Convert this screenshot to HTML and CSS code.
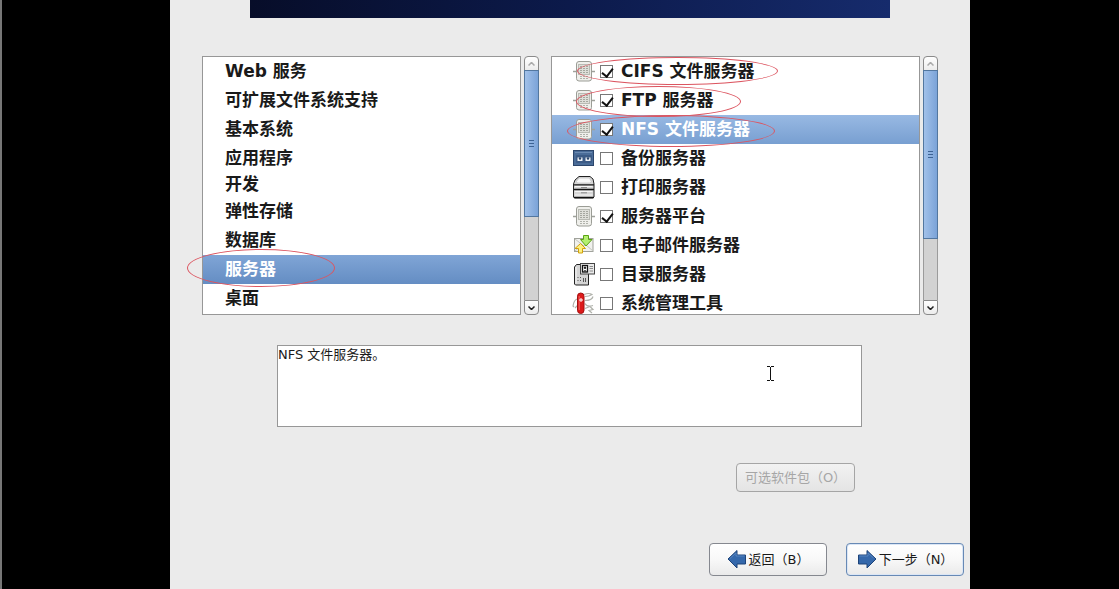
FILE: index.html
```html
<!DOCTYPE html>
<html lang="zh-CN">
<head>
  <meta charset="UTF-8">
  <title>服务器</title>
  <link rel="stylesheet" href="styles.css">
</head>
<body>

<!-- Shared server icon -->
<svg class="sprite" aria-hidden="true">
  <symbol id="server" viewBox="0 0 24 24">
    <path d="M1 12.500h22" stroke="#9fa19b" stroke-width="1.500"/>
    <rect x="4.500" y="2.500" width="15" height="19.500" rx="2.500" fill="#efefeb" stroke="#9b9d96"/>
    <rect x="6.500" y="5.500" width="11" height="10" fill="#dedfd9" stroke="#b9bbb4"/>
    <path d="M8 7.500h8M8 9.500h8M8 11.500h8M8 13.500h8" stroke="#a5a79f" stroke-dasharray="2 1"/>
    <path d="M8 17.500h2M11 17.500h2M14 17.500h2M8 19.500h2M11 19.500h2M14 19.500h2" stroke="#b0b2ab"/>
  </symbol>
</svg>

<main class="installer">
  <div class="banner"></div>

  <div class="panes">
    <!-- Groups -->
    <section class="pane">
      <ul class="list groups">
        <li><button type="button">Web 服务</button></li>
        <li><button type="button">可扩展文件系统支持</button></li>
        <li><button type="button">基本系统</button></li>
        <li><button type="button">应用程序</button></li>
        <li class="short"><button type="button">开发</button></li>
        <li><button type="button">弹性存储</button></li>
        <li><button type="button">数据库</button></li>
        <li class="selected"><button type="button">服务器</button></li>
        <li><button type="button">桌面</button></li>
      </ul>
      <div class="scrollbar">
        <button class="step up" type="button" aria-label="向上" disabled><svg viewBox="0 0 7 4"><path d="M.5 3.5l3-3 3 3"/></svg></button>
        <div class="track"><div class="thumb thumb-groups"><span class="grip"></span></div></div>
        <button class="step down" type="button" aria-label="向下"><svg viewBox="0 0 7 4"><path d="M.5 .5l3 3 3-3"/></svg></button>
      </div>
      <span class="mark mark-group"></span>
    </section>

    <!-- Packages -->
    <section class="pane">
      <ul class="list packages">
        <li>
          <svg class="icon"><use href="#server"/></svg>
          <input type="checkbox" id="cifs" checked>
          <label for="cifs">CIFS 文件服务器</label>
        </li>
        <li>
          <svg class="icon"><use href="#server"/></svg>
          <input type="checkbox" id="ftp" checked>
          <label for="ftp">FTP 服务器</label>
        </li>
        <li class="selected">
          <svg class="icon"><use href="#server"/></svg>
          <input type="checkbox" id="nfs" checked>
          <label for="nfs">NFS 文件服务器</label>
        </li>
        <li>
          <svg class="icon" viewBox="0 0 24 24">
            <rect x="1.500" y="4.500" width="20" height="15" fill="#4a6c98" stroke="#2c466c"/>
            <path d="M3 6.500h17" stroke="#6c8bb3"/>
            <rect x="4" y="9" width="16" height="8" rx="1" fill="#3c5b86"/>
            <path d="M5.500 11.500h5v3.500h-5zM13.500 11.500h5v3.500h-5z" fill="#f0f3f7"/>
            <circle cx="8" cy="12.500" r="1.200" fill="#2c466c"/>
            <circle cx="16" cy="12.500" r="1.200" fill="#2c466c"/>
          </svg>
          <input type="checkbox" id="backup">
          <label for="backup">备份服务器</label>
        </li>
        <li>
          <svg class="icon" viewBox="0 0 24 24">
            <path d="M1.500 9l1.500-4 4-3.500h11l3 2.500 1 5v13l-1 1H2.500l-1-1z" fill="#d6d6d6" stroke="#222"/>
            <path d="M7 3h10.500l2 4-2 1H6L4 7z" fill="#f8f8f8" stroke="#c4c4c4" stroke-width=".8"/>
            <path d="M3 11.500h17.500M3 16.500h17.500M3 20h17.500" stroke="#f6f6f6"/>
            <path d="M2 9.800h20M2 14.500h20" stroke="#151515" stroke-width="1.300"/>
            <path d="M9 12.500h6M9 17.800h6" stroke="#8a8a8a"/>
            <path d="M2 22.500h20" stroke="#111" stroke-width="1.400"/>
          </svg>
          <input type="checkbox" id="print">
          <label for="print">打印服务器</label>
        </li>
        <li>
          <svg class="icon"><use href="#server"/></svg>
          <input type="checkbox" id="platform" checked>
          <label for="platform">服务器平台</label>
        </li>
        <li>
          <svg class="icon" viewBox="0 0 24 24">
            <rect x="2.500" y="5.500" width="18.500" height="13" fill="#f1f1ee" stroke="#a0a29b"/>
            <path d="M3 18l7-6M21 18l-7-6M3 6l9 7 9-7" fill="none" stroke="#c3c5be"/>
            <path d="M11.500 2.500h5v4h3.500L14 13 8.500 6.500h3z" fill="#b4ef70" stroke="#5aa414"/>
            <path d="M8.500 10.500l5 5h-3v4.500h-4v-4.500H3z" fill="#fdf181" stroke="#d2a10c"/>
          </svg>
          <input type="checkbox" id="mail">
          <label for="mail">电子邮件服务器</label>
        </li>
        <li>
          <svg class="icon" viewBox="0 0 24 24">
            <path d="M2.500 5l2-2.500h12V23h-13l-1-1z" fill="#d4d4d4" stroke="#222"/>
            <path d="M4 5v16.500" stroke="#f8f8f8"/>
            <path d="M5.500 15.500h1M8 15.500h1M5.500 18.500h1M8 18.500h1M11.500 16v4M13.500 16v4" stroke="#555"/>
            <rect x="8.500" y="1.500" width="14" height="10.500" fill="#eaeaea" stroke="#444"/>
            <rect x="10.500" y="3.500" width="5" height="6.500" fill="#fff" stroke="#111" stroke-width="1.300"/>
            <circle cx="13" cy="5.800" r="1.200" fill="#222"/>
            <path d="M11.200 9.500q1.800-3 3.600 0z" fill="#222"/>
            <path d="M17.500 4.500h3.500M17.500 6.500h3.500M17.500 9h3.500" stroke="#8a8a8a"/>
          </svg>
          <input type="checkbox" id="directory">
          <label for="directory">目录服务器</label>
        </li>
        <li>
          <svg class="icon" viewBox="0 0 24 24">
            <path d="M5 8q-3 1-4 7l1 1M6 14l-3 3M12 3.500q5-2 8 0-3 2-7 2M13 9.500q7 0 8-4M13 12.500q2 4 8 2M13 17.500l5-2 3 3-4 1 3 2.500" fill="none" stroke="#b0b2ab" stroke-width="1.200"/>
            <rect x="5.500" y="2" width="6.500" height="20.500" rx="3.200" fill="#dd1a1a" stroke="#a31010"/>
            <path d="M7.200 5v14" stroke="#f06565"/>
            <path d="M9 7v4M7 9h4" stroke="#fff"/>
          </svg>
          <input type="checkbox" id="admin">
          <label for="admin">系统管理工具</label>
        </li>
      </ul>
      <div class="scrollbar">
        <button class="step up" type="button" aria-label="向上" disabled><svg viewBox="0 0 7 4"><path d="M.5 3.5l3-3 3 3"/></svg></button>
        <div class="track"><div class="thumb thumb-packages"><span class="grip"></span></div></div>
        <button class="step down" type="button" aria-label="向下"><svg viewBox="0 0 7 4"><path d="M.5 .5l3 3 3-3"/></svg></button>
      </div>
      <span class="mark mark-cifs"></span>
      <span class="mark mark-ftp"></span>
      <span class="mark mark-nfs"></span>
    </section>
  </div>

  <div class="details">
    <textarea class="description" aria-label="说明" readonly>NFS 文件服务器。</textarea>
    <svg class="cursor" viewBox="0 0 7 15"><path d="M0 .5h3M4 .5h3M3.500 1v13M0 14.500h3M4 14.500h3"/></svg>
  </div>

  <div class="optional">
    <button class="btn btn-small" type="button" disabled>可选软件包（O）</button>
  </div>

  <footer class="actions">
    <button class="btn" type="button">
      <svg class="arrow" viewBox="0 0 20 20"><path d="M1 10l9-8.500V6h8.500v9H10v4z" fill="#3568ab" stroke="#1d4379"/><path d="M3 9.500L9 4v3h8.500" fill="none" stroke="#5583bf"/></svg>
      返回（B）
    </button>
    <button class="btn btn-default" type="button">
      <svg class="arrow" viewBox="0 0 20 20"><path d="M19 10l-9-8.500V6H1.500v9H10v4z" fill="#3568ab" stroke="#1d4379"/><path d="M2.500 7H11V4l5.500 5" fill="none" stroke="#5583bf"/></svg>
      下一步（N）
    </button>
  </footer>
</main>

</body>
</html>
```
FILE: styles.css
```css
* {
  box-sizing: border-box;
}

body {
  margin: 0;
  min-height: 100vh;
  padding: 0 149px 0 170px;
  display: flex;
  background: #000;
  box-shadow: inset 2px 0 #777;
  font: 13px "DejaVu Sans", "Noto Sans CJK SC", sans-serif;
  color: #1a1a1a;
}

button,
textarea {
  font: inherit;
  color: inherit;
}

.sprite {
  position: absolute;
  width: 0;
  height: 0;
}

.installer {
  flex: 1;
  background: #ebebeb;
}

.banner {
  height: 18px;
  margin: 0 80px;
  background: linear-gradient(90deg, #070d29, #0c1a4b 50%, #162b6c);
}

/* Lists */
.panes {
  display: grid;
  grid-template-columns: 337fr 387fr;
  gap: 12px;
  padding: 38px 32px 30px;
}

.pane {
  position: relative;
  display: flex;
  gap: 3px;
  height: 259px;
}

.list {
  flex: 1;
  margin: 0;
  padding: 0;
  list-style: none;
  overflow: hidden;
  background: #fff;
  border: 1px solid #979797;
  font-size: 17px;
  font-weight: bold;
  line-height: 29px;
}

.list li {
  display: flex;
  align-items: center;
  height: 29px;
}

.list .short {
  height: 24px;
}

.groups button {
  flex: 1;
  padding: 0 0 2px 22px;
  border: none;
  background: none;
  text-align: left;
  line-height: 24px;
}

.packages li {
  padding-left: 20px;
}

.groups .selected {
  background: linear-gradient(#80a5d6, #648dc3);
  color: #fff;
}

.packages .selected {
  background: linear-gradient(#98b9e3, #789fd1);
  color: #fff;
}

.icon {
  width: 24px;
  height: 24px;
  margin: 0 4px 2px 0;
}

.packages input {
  appearance: none;
  width: 13px;
  height: 13px;
  margin: 0 8px 0 0;
  border: 1px solid #777;
  background: #fff;
}

.packages input:checked::after {
  content: "";
  display: block;
  width: 5px;
  height: 9px;
  margin: 0 0 0 3px;
  border: solid #111;
  border-width: 0 2px 2px 0;
  transform: rotate(38deg);
}

/* Scrollbars */
.scrollbar {
  width: 15px;
  display: flex;
  flex-direction: column;
}

.step {
  height: 15px;
  padding: 0;
  display: flex;
  align-items: center;
  justify-content: center;
  border: 1px solid #8a8a8a;
  background: linear-gradient(#fff, #ececec);
}

.step svg {
  width: 7px;
  height: 4px;
  fill: none;
  stroke: #222;
  stroke-width: 1.5;
}

.up {
  border-radius: 4px 4px 0 0;
}

.up svg {
  stroke: #aaa;
}

.down {
  border-radius: 0 0 4px 4px;
}

.track {
  flex: 1;
  background: #d2d2d2;
  border: solid #9b9b9b;
  border-width: 0 1px;
}

.thumb {
  margin: -1px -1px 0;
  display: flex;
  align-items: center;
  justify-content: center;
  border: 1px solid #53779f;
  background: linear-gradient(90deg, #a2c1e9, #7ba3d8);
}

.thumb-groups {
  height: 64%;
}

.thumb-packages {
  height: 74%;
}

.grip {
  width: 5px;
  height: 7px;
  border: solid #3d6394;
  border-width: 1px 0;
  background: linear-gradient(#3d6394, #3d6394) center / 5px 1px no-repeat;
}

/* Red ellipses */
.mark {
  position: absolute;
  border: 1px solid #dc5560;
  border-radius: 50%;
  pointer-events: none;
}

.mark-group {
  left: -15px;
  top: 193px;
  width: 148px;
  height: 38px;
}

.mark-cifs {
  left: 26px;
  top: 1px;
  width: 201px;
  height: 28px;
}

.mark-ftp {
  left: 25px;
  top: 30px;
  width: 165px;
  height: 31px;
}

.mark-nfs {
  left: 16px;
  top: 59px;
  width: 208px;
  height: 32px;
}

/* Description */
.details {
  position: relative;
  margin: 0 108px 0 107px;
}

.description {
  display: block;
  width: 100%;
  height: 82px;
  padding: 0;
  border: 1px solid #979797;
  background: #fff;
  line-height: 18px;
  resize: none;
  outline: none;
}

.cursor {
  position: absolute;
  left: 490px;
  top: 21px;
  width: 7px;
  height: 15px;
  stroke: #111;
}

/* Buttons */
.btn {
  display: flex;
  align-items: center;
  justify-content: center;
  gap: 2px;
  width: 118px;
  height: 33px;
  padding: 0 0 2px;
  border: 1px solid #85888f;
  border-radius: 4px;
  background: linear-gradient(#fff, #f8f8f8 50%, #eaeaea);
}

.btn-small {
  width: 119px;
  height: 29px;
}

.btn:disabled {
  border-color: #a5a5a5;
  background: linear-gradient(#f2f2f2, #e4e4e4);
  color: #a6a6a6;
}

.btn-default {
  border-color: #6789b5;
  box-shadow: inset 0 0 0 1px #dbe6f5;
}

.arrow {
  width: 20px;
  height: 20px;
}

.optional {
  display: flex;
  justify-content: flex-end;
  padding: 36px 115px 0 0;
}

.actions {
  display: flex;
  justify-content: flex-end;
  gap: 19px;
  padding: 51px 6px 13px 0;
}
```
